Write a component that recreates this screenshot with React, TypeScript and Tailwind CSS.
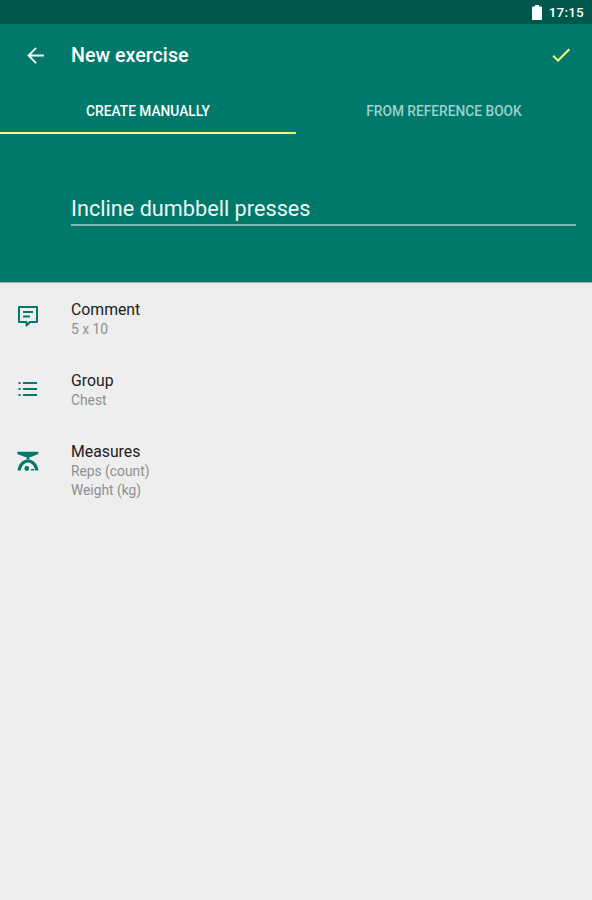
export default function App() {
  const font = { fontFamily: "Roboto, sans-serif" };
  return (
    <div style={font} className="w-[592px] h-[900px] bg-[#eeeeee] flex flex-col overflow-hidden font-['Roboto',sans-serif]">
      <div className="h-6 bg-[#00574b] flex items-center justify-end pr-2 gap-[7px]">
        <svg width="10" height="15" viewBox="0 0 10 15"><path d="M3 0h4v1.500h2.200a.8.8 0 0 1 .8.800V14.200a.8.8 0 0 1-.8.800H.8a.8.8 0 0 1-.8-.8V2.300a.8.8 0 0 1 .8-.8H3z" fill="#fff" /></svg>
        <span className="text-[13.5px] font-medium text-white tracking-[0.2px]">17:15</span>
      </div>
      <div className="bg-[#00796b] h-[110px] flex flex-col">
        <div className="h-[62px] flex items-center">
          <div className="w-[71px] flex pl-[23px]">
            <svg width="25" height="25" viewBox="0 0 24 24" fill="#fff"><path d="M20 11.100H7.500l5.700-5.800L12 4.100 4.100 12l7.900 7.900 1.200-1.200-5.700-5.800H20z" /></svg>
          </div>
          <span className="text-[19.7px] font-medium text-white flex-1 pt-[1px]">New exercise</span>
          <svg className="mr-[19px]" width="24" height="24" viewBox="0 0 24 24" fill="#f4ff81"><path d="M9 16.170 4.830 12l-1.420 1.410L9 19 21 7l-1.410-1.410z" /></svg>
        </div>
        <div className="flex-1 flex">
          <div className="w-[296px] flex flex-col">
            <div className="flex-1 flex items-center justify-center text-[13.75px] font-medium text-white pt-[5px]">CREATE MANUALLY</div>
            <div className="h-[2px] bg-[#f4ff81]" />
          </div>
          <div className="w-[296px] flex items-center justify-center text-[13.75px] font-medium text-[#9fd0ca] pt-[3px]">FROM REFERENCE BOOK</div>
        </div>
      </div>
      <div className="bg-[#00796b] h-[148px] pl-[71px] pr-4 pt-[59px] shadow-[0_1px_1px_rgba(0,0,0,0.25)] relative">
        <div className="border-b-2 border-[#80bcb5] h-[33px] text-[21.7px] leading-[32px] text-[#ecf7f5]">Incline dumbbell presses</div>
      </div>
      <div className="pt-[18px] flex flex-col">
        <Row icon={<CommentIcon />} title="Comment" lines={["5 x 10"]} />
        <Row icon={<ListIcon />} title="Group" lines={["Chest"]} />
        <Row icon={<MeasureIcon />} title="Measures" lines={["Reps (count)", "Weight (kg)"]} />
      </div>
    </div>
  );
}

function Row({ icon, title, lines }: { icon: React.ReactNode; title: string; lines: string[] }) {
  return (
    <div className="flex mb-[32px]">
      <div className="w-[71px] pl-4 pt-[4px] shrink-0">{icon}</div>
      <div>
        <div className="text-[15.8px] leading-5 text-[#212121]">{title}</div>
        {lines.map((l) => (
          <div key={l} className="text-[13.8px] leading-[19px] text-[#8f8f8f]">{l}</div>
        ))}
      </div>
    </div>
  );
}

function CommentIcon() {
  return (
    <svg width="24" height="24" viewBox="0 0 24 24" fill="none" stroke="#00796b" strokeWidth="2">
      <path d="M3 3h18v15h-7l-3.500 3.500V18H3z" strokeLinejoin="round" />
      <path d="M7 8h10M7 12.500h7" />
    </svg>
  );
}

function ListIcon() {
  return (
    <svg width="24" height="24" viewBox="0 0 24 24" fill="#00796b" className="mt-[2px]">
      <rect x="7" y="5" width="14" height="2" />
      <rect x="7" y="11" width="14" height="2" />
      <rect x="7" y="17" width="14" height="2" />
      <rect x="2.500" y="5" width="2" height="2" />
      <rect x="2.500" y="11" width="2" height="2" />
      <rect x="2.500" y="17" width="2" height="2" />
    </svg>
  );
}

function MeasureIcon() {
  return (
    <svg width="24" height="24" viewBox="0 0 24 24" fill="#00796b" className="mt-[1px]">
      <path d="M1.300 4.700h21v2.300L15 10H9L1.300 7z" />
      <path d="M10.500 10h3v2.500h-3z" />
      <path d="M1.500 23.500C2 18 6 12.500 12 12.500s10 5.500 10.500 11h-3.300C18.600 19.500 16 15.500 12 15.500s-6.600 4-7.200 8z" />
      <circle cx="10.800" cy="21.500" r="2.400" />
      <path d="M15 22h3.200v1.500H15z" />
    </svg>
  );
}
